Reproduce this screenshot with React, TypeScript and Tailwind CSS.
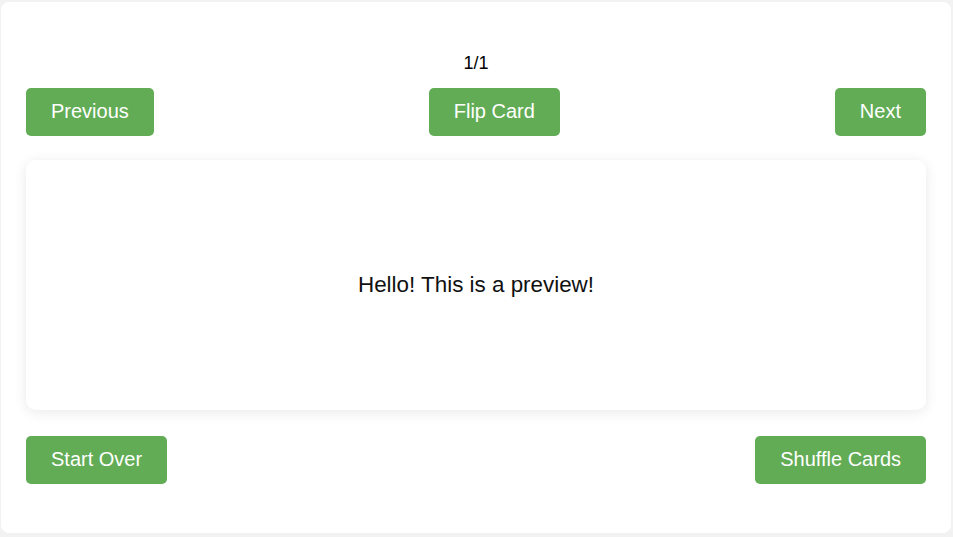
const GreenButton = ({ label }: { label: string }) => (
  <button className="bg-[#62ac55] text-white text-[20px] leading-[24px] px-[25px] pt-[11px] pb-[13px] rounded-[5px]">
    {label}
  </button>
);

export default function App() {
  return (
    <div className="min-h-screen bg-[#f2f2f2] pt-[2px] pl-[1px] pr-[2px] pb-[4px] font-['Liberation_Sans',Arial,sans-serif]">
      <div className="bg-white rounded-[8px] h-[531px] px-[25px] pt-[51px] flex flex-col">
        <div className="text-center text-[18px] leading-[21px] text-black">1/1</div>

        <div className="flex justify-between items-center mt-[14px]">
          <GreenButton label="Previous" />
          <GreenButton label="Flip Card" />
          <GreenButton label="Next" />
        </div>

        <div className="mt-[24px] h-[250px] rounded-[10px] bg-white shadow-[0_2px_14px_rgba(0,0,0,0.09)] flex items-center justify-center">
          <p className="text-[22.4px] text-[#111]">Hello! This is a preview!</p>
        </div>

        <div className="flex justify-between items-center mt-[26px]">
          <GreenButton label="Start Over" />
          <GreenButton label="Shuffle Cards" />
        </div>
      </div>
    </div>
  );
}
